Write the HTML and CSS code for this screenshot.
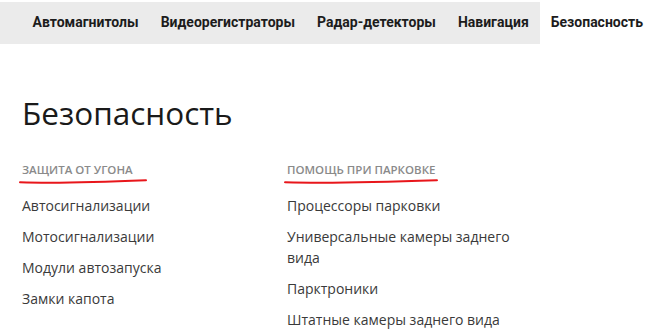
FILE: index.html
```html
<!DOCTYPE html>
<html lang="ru">
<head>
<meta charset="utf-8">
<link rel="stylesheet" href="styles.css">
</head>
<body>
<nav class="topnav">
  <a class="topnav__item">Автомагнитолы</a>
  <a class="topnav__item">Видеорегистраторы</a>
  <a class="topnav__item">Радар-детекторы</a>
  <a class="topnav__item">Навигация</a>
  <a class="topnav__item topnav__item--active">Безопасность</a>
</nav>
<main class="content">
  <h1 class="title">Безопасность</h1>
  <div class="columns">
    <section class="group">
      <h2 class="group__title">Защита от угона
        <svg class="group__line group__line--long" viewBox="0 0 128 6" preserveAspectRatio="none"><path d="M1 4.2 C 30 5.2, 70 4.6, 127 2.2" /></svg>
      </h2>
      <ul class="group__list">
        <li>Автосигнализации</li>
        <li>Мотосигнализации</li>
        <li>Модули автозапуска</li>
        <li>Замки капота</li>
      </ul>
    </section>
    <section class="group">
      <h2 class="group__title">Помощь при парковке
        <svg class="group__line group__line--short" viewBox="0 0 128 6" preserveAspectRatio="none"><path d="M1 4.2 C 30 5.2, 70 4.6, 127 2.2" /></svg>
      </h2>
      <ul class="group__list">
        <li>Процессоры парковки</li>
        <li>Универсальные камеры заднего вида</li>
        <li>Парктроники</li>
        <li>Штатные камеры заднего вида</li>
      </ul>
    </section>
  </div>
</main>
</body>
</html>
```
FILE: styles.css
```css
* { box-sizing: border-box; }
html, body { margin: 0; padding: 0; background: #fff; }
body { font-family: "Open Sans", "Noto Sans", sans-serif; color: #333; }

.topnav {
  margin-top: 2px;
  height: 42px;
  background: #ebebeb;
  display: flex;
  align-items: stretch;
  padding-left: 22px;
}
.topnav__item {
  display: flex;
  align-items: center;
  padding: 0 10.5px 2px;
  margin-right: 1px;
  font-family: Roboto, "Open Sans", sans-serif;
  font-size: 14px;
  font-weight: 700;
  color: #1c1c1c;
  white-space: nowrap;
}
.topnav__item--active { background: #fff; flex: 1; margin-right: 0; }

.content { padding: 49px 22px 0; }
.title {
  margin: 0;
  font-size: 31.5px;
  font-weight: 400;
  line-height: 40px;
  color: #1a1a1a;
}
.columns { display: grid; grid-template-columns: 265px 1fr; margin-top: 24px; }
.group__title {
  position: relative;
  display: inline-block;
  margin: 0;
  font-size: 11.5px;
  font-weight: 600;
  text-transform: uppercase;
  color: #8a8a8a;
  line-height: 16px;
}
.group__line {
  position: absolute;
  left: -3px;
  bottom: -6px;
  height: 6px;
  overflow: visible;
}
.group__line--long { width: 128px; }
.group__line--short { width: 154px; }
.group__line path { fill: none; stroke: #e8161b; stroke-width: 2; stroke-linecap: round; }
.group__list {
  list-style: none;
  margin: 16px 0 0;
  padding: 0;
  width: 240px;
}
.group__list li {
  font-size: 14px;
  line-height: 21px;
  font-weight: 500;
  color: #3a3a3a;
  margin-bottom: 10px;
}
```
